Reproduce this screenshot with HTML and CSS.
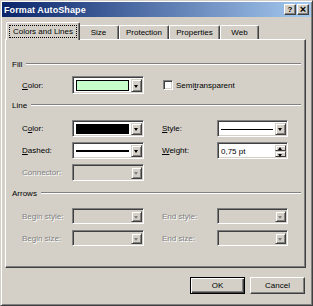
FILE: index.html
```html
<!DOCTYPE html>
<html lang="en">

<head>
  <meta charset="UTF-8">
  <title>Format AutoShape</title>
  <link rel="stylesheet" href="styles.css">
</head>

<body>
  <div class="window">
    <div class="titlebar">
      <span class="title">Format AutoShape</span>
      <div class="caption-btns">
        <span class="cbtn">?</span>
        <span class="cbtn close">×</span>
      </div>
    </div>

    <div class="tabs">
      <div class="tab active"><span class="focus">Colors and Lines</span></div>
      <div class="tab tab-size">Size</div>
      <div class="tab tab-protection">Protection</div>
      <div class="tab tab-properties">Properties</div>
      <div class="tab tab-web">Web</div>
    </div>

    <div class="panel">
      <div class="group-head head-fill"><span>Fill</span><i class="rule"></i></div>
      <div class="grid grid-fill">
        <span class="lbl"><u>C</u>olor:</span>
        <div class="combo tall">
          <span class="swatch green"></span>
          <span class="drop"></span>
        </div>
        <div class="check-cell">
          <span class="checkbox"></span>
          <span>Semi<u>t</u>ransparent</span>
        </div>
      </div>

      <div class="group-head head-line"><span>Line</span><i class="rule"></i></div>
      <div class="grid grid-line">
        <span class="lbl">C<u>o</u>lor:</span>
        <div class="combo">
          <span class="swatch black"></span>
          <span class="drop"></span>
        </div>
        <span class="lbl lbl2"><u>S</u>tyle:</span>
        <div class="combo">
          <span class="line-preview thin"></span>
          <span class="drop"></span>
        </div>

        <span class="lbl"><u>D</u>ashed:</span>
        <div class="combo">
          <span class="line-preview thick"></span>
          <span class="drop"></span>
        </div>
        <span class="lbl lbl2"><u>W</u>eight:</span>
        <div class="spinner">
          <span class="value">0,75 pt</span>
          <span class="spin">
            <span class="spin-btn"><i class="arrow up"></i></span>
            <span class="spin-btn"><i class="arrow"></i></span>
          </span>
        </div>

        <span class="lbl disabled">Connector:</span>
        <div class="combo off">
          <span class="drop"></span>
        </div>
      </div>

      <div class="group-head head-arrows"><span>Arrows</span><i class="rule"></i></div>
      <div class="grid grid-arrows">
        <span class="lbl disabled">Begin style:</span>
        <div class="combo off"><span class="drop"></span></div>
        <span class="lbl lbl2 disabled">End style:</span>
        <div class="combo off"><span class="drop"></span></div>

        <span class="lbl disabled">Begin size:</span>
        <div class="combo off"><span class="drop"></span></div>
        <span class="lbl lbl2 disabled">End size:</span>
        <div class="combo off"><span class="drop"></span></div>
      </div>
    </div>

    <div class="buttons">
      <button class="btn default">OK</button>
      <button class="btn">Cancel</button>
    </div>
  </div>
</body>

</html>
```

FILE: styles.css
```css
* {
  margin: 0;
  padding: 0;
  box-sizing: border-box;
}

body {
  background: #d4d0c8;
  font: 8px "Liberation Sans", Arial, sans-serif;
  color: #000;
}

u {
  text-decoration: underline;
}

.window {
  width: 313px;
  height: 306px;
  background: #d4d0c8;
  border: 1px solid;
  border-color: #d4d0c8 #404040 #404040 #d4d0c8;
  box-shadow: inset 1px 1px #fff, inset -1px -1px #808080;
  padding: 1px;
}

/* title bar */
.titlebar {
  display: flex;
  align-items: center;
  justify-content: space-between;
  height: 15px;
  padding: 0 2px 0 2px;
  background: linear-gradient(to right, #0a246a, #a6caf0);
}

.title {
  color: #fff;
  font-weight: bold;
  font-size: 9px;
  letter-spacing: 0.1px;
}

.caption-btns {
  display: flex;
  gap: 1px;
}

.cbtn {
  width: 12px;
  height: 11px;
  display: flex;
  align-items: center;
  justify-content: center;
  background: #d4d0c8;
  border: 1px solid;
  border-color: #fff #404040 #404040 #fff;
  box-shadow: inset -1px -1px #808080;
  font-weight: bold;
  font-size: 8px;
  line-height: 1;
}

.cbtn.close {
  font-size: 11px;
}

/* tabs */
.tabs {
  display: flex;
  align-items: flex-end;
  height: 17px;
  margin-top: 5px;
  margin-left: 6px;
}

.tab {
  position: relative;
  height: 14px;
  display: flex;
  align-items: center;
  justify-content: center;
  background: #d4d0c8;
  border: 1px solid;
  border-bottom: none;
  border-color: #fff #404040 #404040 #fff;
  border-radius: 2px 2px 0 0;
  box-shadow: inset -1px 0 #808080;
}

.tab.active {
  z-index: 1;
  width: 74px;
  height: 18px;
  margin: 0 -2px -1px -2px;
  padding-bottom: 1px;
}

.focus {
  outline: 1px dotted #000;
  outline-offset: 1px;
  padding: 0 2px;
}

.tab-size { width: 41px; }
.tab-protection { width: 50px; }
.tab-properties { width: 51px; }
.tab-web { width: 39px; }

/* panel */
.panel {
  width: 301px;
  height: 229px;
  margin-left: 3px;
  border: 1px solid;
  border-color: #fff #404040 #404040 #fff;
  box-shadow: inset -1px -1px #808080;
  padding: 0 4px 0 6px;
}

.group-head {
  display: flex;
  align-items: center;
  height: 12px;
}

.rule {
  flex: 1;
  height: 2px;
  margin-left: 4px;
  border-top: 1px solid #808080;
  border-bottom: 1px solid #fff;
}

.head-fill { margin-top: 18px; }
.head-line { margin-top: 5px; }
.head-arrows { margin-top: 6px; }

.grid {
  display: grid;
  grid-template-columns: 50px 72px 18px 55px 71px;
  row-gap: 5px;
  margin-left: 10px;
  align-items: center;
}

.grid-fill {
  margin-top: 6px;
  grid-auto-rows: 18px;
}

.grid-line {
  margin-top: 9px;
  grid-auto-rows: 17px;
}

.grid-arrows {
  margin-top: 9px;
  grid-auto-rows: 16px;
  row-gap: 6px;
}

.lbl {
  grid-column: 1;
  white-space: nowrap;
}

.lbl2 {
  grid-column: 4;
}

.disabled {
  color: #808080;
  text-shadow: 1px 1px #fff;
}

/* combo boxes */
.combo {
  height: 100%;
  display: flex;
  align-items: stretch;
  background: #fff;
  border: 1px solid;
  border-color: #808080 #fff #fff #808080;
  box-shadow: inset 1px 1px #404040, inset -1px -1px #d4d0c8;
  padding: 2px 1px 1px 2px;
}

.combo.off {
  background: #d4d0c8;
  justify-content: flex-end;
}

.swatch {
  flex: 1;
  margin: 1px 2px 1px 1px;
  border: 1px solid #000;
}

.swatch.green {
  background: #c6ffca;
}

.swatch.black {
  background: #000;
}

.line-preview {
  flex: 1;
  align-self: center;
  margin: 0 2px 0 1px;
  background: #000;
}

.line-preview.thin {
  height: 1px;
}

.line-preview.thick {
  height: 2px;
}

.drop {
  position: relative;
  width: 11px;
  background: #d4d0c8;
  border: 1px solid;
  border-color: #d4d0c8 #404040 #404040 #d4d0c8;
  box-shadow: inset 1px 1px #fff, inset -1px -1px #808080;
}

.drop::after {
  content: "";
  position: absolute;
  left: 2px;
  top: 50%;
  margin-top: -1px;
  border-left: 2.5px solid transparent;
  border-right: 2.5px solid transparent;
  border-top: 3px solid #000;
}

.combo.off .drop::after {
  border-top-color: #808080;
}

/* checkbox */
.check-cell {
  grid-column: 4 / 6;
  display: flex;
  align-items: center;
  gap: 3px;
  margin-left: 1px;
}

.checkbox {
  width: 10px;
  height: 10px;
  background: #fff;
  border: 1px solid;
  border-color: #808080 #fff #fff #808080;
  box-shadow: inset 1px 1px #404040, inset -1px -1px #d4d0c8;
}

/* spinner */
.spinner {
  height: 100%;
  display: flex;
  align-items: stretch;
  background: #fff;
  border: 1px solid;
  border-color: #808080 #fff #fff #808080;
  box-shadow: inset 1px 1px #404040, inset -1px -1px #d4d0c8;
  padding: 2px 1px 1px 2px;
}

.value {
  flex: 1;
  display: flex;
  align-items: center;
  padding-left: 1px;
}

.spin {
  display: flex;
  flex-direction: column;
  width: 11px;
}

.spin-btn {
  position: relative;
  flex: 1;
  background: #d4d0c8;
  border: 1px solid;
  border-color: #d4d0c8 #404040 #404040 #d4d0c8;
  box-shadow: inset 1px 1px #fff;
}

.arrow {
  position: absolute;
  left: 2px;
  top: 2px;
  border-left: 2.5px solid transparent;
  border-right: 2.5px solid transparent;
  border-top: 3px solid #000;
}

.arrow.up {
  top: 1px;
  border-top: none;
  border-bottom: 3px solid #000;
}

/* dialog buttons */
.buttons {
  display: flex;
  justify-content: flex-end;
  gap: 5px;
  margin-top: 9px;
  margin-right: 6px;
}

.btn {
  width: 55px;
  height: 17px;
  background: #d4d0c8;
  font: 8px "Liberation Sans", Arial, sans-serif;
  color: #000;
  border: 1px solid;
  border-color: #fff #404040 #404040 #fff;
  box-shadow: inset -1px -1px #808080;
}

.btn.default {
  border-color: #000;
  box-shadow: inset 1px 1px #fff, inset -1px -1px #404040, inset -2px -2px #808080;
}
```
